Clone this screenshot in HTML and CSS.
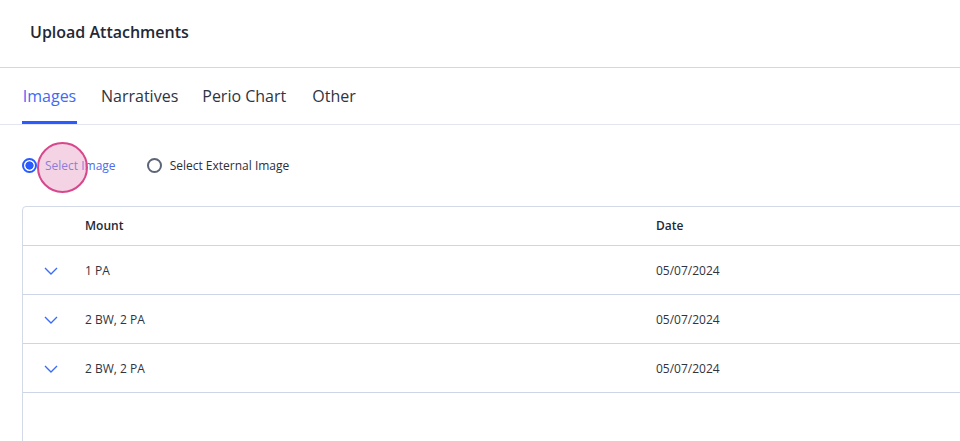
FILE: index.html
```html
<!DOCTYPE html>
<html lang="en">
<head>
<meta charset="utf-8">
<title>Upload Attachments</title>
<link rel="stylesheet" href="styles.css">
</head>
<body>
<div class="page">
  <header class="header">
    <h1 class="title">Upload Attachments</h1>
  </header>
  <nav class="tabs">
    <span class="tab active">Images</span>
    <span class="tab">Narratives</span>
    <span class="tab">Perio Chart</span>
    <span class="tab">Other</span>
  </nav>
  <div class="radios">
    <label class="radio checked">
      <span class="dot"></span>
      <span class="radio-label">Select Image</span>
      <span class="click-ring"></span>
    </label>
    <label class="radio">
      <span class="dot"></span>
      <span class="radio-label">Select External Image</span>
    </label>
  </div>
  <div class="table">
    <div class="row head">
      <div class="cell toggle"></div>
      <div class="cell mount">Mount</div>
      <div class="cell date">Date</div>
    </div>
    <div class="row">
      <div class="cell toggle"><svg class="chev" width="14" height="8" viewBox="0 0 14 8"><path d="M1 1 L7 7 L13 1" fill="none" stroke="#3c6cf6" stroke-width="1.4"/></svg></div>
      <div class="cell mount">1 PA</div>
      <div class="cell date">05/07/2024</div>
    </div>
    <div class="row">
      <div class="cell toggle"><svg class="chev" width="14" height="8" viewBox="0 0 14 8"><path d="M1 1 L7 7 L13 1" fill="none" stroke="#3c6cf6" stroke-width="1.4"/></svg></div>
      <div class="cell mount">2 BW, 2 PA</div>
      <div class="cell date">05/07/2024</div>
    </div>
    <div class="row">
      <div class="cell toggle"><svg class="chev" width="14" height="8" viewBox="0 0 14 8"><path d="M1 1 L7 7 L13 1" fill="none" stroke="#3c6cf6" stroke-width="1.4"/></svg></div>
      <div class="cell mount">2 BW, 2 PA</div>
      <div class="cell date">05/07/2024</div>
    </div>
  </div>
</div>
</body>
</html>
```

FILE: styles.css
```css
html, body {
  margin: 0;
  padding: 0;
  background: #ffffff;
  overflow: hidden;
}
body {
  font-family: "Open Sans", "Noto Sans", sans-serif;
  color: #2b2f3a;
  width: 960px;
  height: 441px;
}
.page {
  display: flex;
  flex-direction: column;
  height: 441px;
  overflow: hidden;
}
.header {
  height: 68px;
  flex: none;
  border-bottom: 1px solid #d3d8e0;
  display: flex;
  align-items: center;
  padding-left: 30px;
  box-sizing: border-box;
}
.title {
  margin: 0;
  font-size: 16px;
  font-weight: 600;
  color: #232836;
  padding-bottom: 4px;
}
.tabs {
  height: 57px;
  flex: none;
  box-sizing: border-box;
  border-bottom: 1px solid #e3e6ee;
  display: flex;
  gap: 24px;
  padding-left: 22px;
}
.tab {
  font-size: 16px;
  color: #2f3441;
  display: flex;
  align-items: center;
  justify-content: center;
  height: 100%;
  box-sizing: border-box;
  padding-top: 2px;
  border-bottom: 3px solid transparent;
}
.tab.active {
  min-width: 55px;
  color: #3f6af5;
  border-bottom-color: #2a5bff;
}
.tab:last-child {
  margin-left: 2px;
}
.radios {
  display: flex;
  flex: none;
  align-items: center;
  gap: 31px;
  padding-left: 22px;
  height: 81px;
  box-sizing: border-box;
}
.radio {
  position: relative;
  display: flex;
  align-items: center;
  gap: 8px;
  font-size: 12px;
  color: #2b2f3a;
}
.dot {
  width: 15px;
  height: 15px;
  box-sizing: border-box;
  border: 2px solid #5b6577;
  border-radius: 50%;
  background: #fff;
}
.radio.checked .dot {
  border-color: #2a5bff;
  background: radial-gradient(circle, #2a5bff 0 3.8px, #fff 4.4px);
}
.radio.checked .radio-label {
  color: #4d6cf0;
}
.click-ring {
  position: absolute;
  left: 15px;
  top: -15px;
  width: 51px;
  height: 51px;
  box-sizing: border-box;
  border-radius: 50%;
  border: 2px solid #d6478c;
  background: rgba(228, 150, 190, 0.42);
}
.table {
  margin-left: 22px;
  margin-right: -20px;
  border: 1px solid #d3d9e6;
  border-top-left-radius: 4px;
  height: 260px;
  flex: none;
  box-sizing: border-box;
}
.row {
  display: grid;
  grid-template-columns: 62px 571px 1fr;
  height: 49px;
  box-sizing: border-box;
  align-items: center;
  border-bottom: 1px solid #cdd6e6;
  font-size: 12px;
  color: #2f3441;
}
.row.head {
  height: 39px;
  font-weight: 600;
  color: #232836;
  padding-bottom: 1px;
}
.cell.toggle {
  display: flex;
  padding-left: 21px;
  padding-top: 2px;
}
```
